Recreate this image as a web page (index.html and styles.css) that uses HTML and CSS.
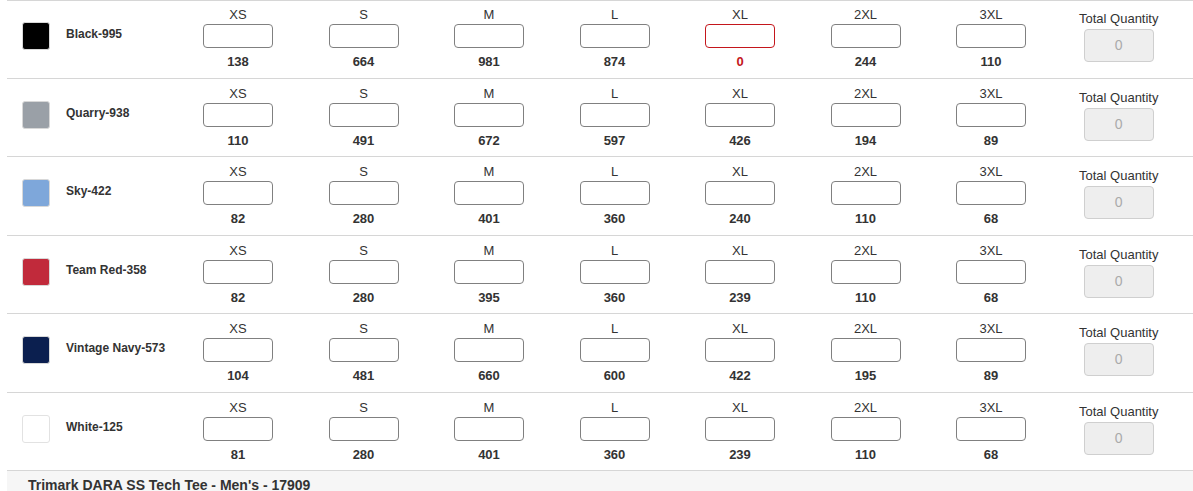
FILE: index.html
```html
<!DOCTYPE html>
<html>
<head>
<meta charset="utf-8">
<link rel="stylesheet" href="styles.css">
</head>
<body>
<div class="sheet">
  <div class="row row-first">
    <div class="color"><span class="swatch sw-black"></span><span class="name">Black-995</span></div>
    <div class="size"><span class="lbl">XS</span><input class="qty" type="text"><span class="stock">138</span></div>
    <div class="size"><span class="lbl">S</span><input class="qty" type="text"><span class="stock">664</span></div>
    <div class="size"><span class="lbl">M</span><input class="qty" type="text"><span class="stock">981</span></div>
    <div class="size"><span class="lbl">L</span><input class="qty" type="text"><span class="stock">874</span></div>
    <div class="size"><span class="lbl">XL</span><input class="qty qty-out" type="text"><span class="stock stock-out">0</span></div>
    <div class="size"><span class="lbl">2XL</span><input class="qty" type="text"><span class="stock">244</span></div>
    <div class="size"><span class="lbl">3XL</span><input class="qty" type="text"><span class="stock">110</span></div>
    <div class="total"><span class="lbl">Total Quantity</span><div class="total-box">0</div></div>
  </div>
  <div class="row">
    <div class="color"><span class="swatch sw-quarry"></span><span class="name">Quarry-938</span></div>
    <div class="size"><span class="lbl">XS</span><input class="qty" type="text"><span class="stock">110</span></div>
    <div class="size"><span class="lbl">S</span><input class="qty" type="text"><span class="stock">491</span></div>
    <div class="size"><span class="lbl">M</span><input class="qty" type="text"><span class="stock">672</span></div>
    <div class="size"><span class="lbl">L</span><input class="qty" type="text"><span class="stock">597</span></div>
    <div class="size"><span class="lbl">XL</span><input class="qty" type="text"><span class="stock">426</span></div>
    <div class="size"><span class="lbl">2XL</span><input class="qty" type="text"><span class="stock">194</span></div>
    <div class="size"><span class="lbl">3XL</span><input class="qty" type="text"><span class="stock">89</span></div>
    <div class="total"><span class="lbl">Total Quantity</span><div class="total-box">0</div></div>
  </div>
  <div class="row">
    <div class="color"><span class="swatch sw-sky"></span><span class="name">Sky-422</span></div>
    <div class="size"><span class="lbl">XS</span><input class="qty" type="text"><span class="stock">82</span></div>
    <div class="size"><span class="lbl">S</span><input class="qty" type="text"><span class="stock">280</span></div>
    <div class="size"><span class="lbl">M</span><input class="qty" type="text"><span class="stock">401</span></div>
    <div class="size"><span class="lbl">L</span><input class="qty" type="text"><span class="stock">360</span></div>
    <div class="size"><span class="lbl">XL</span><input class="qty" type="text"><span class="stock">240</span></div>
    <div class="size"><span class="lbl">2XL</span><input class="qty" type="text"><span class="stock">110</span></div>
    <div class="size"><span class="lbl">3XL</span><input class="qty" type="text"><span class="stock">68</span></div>
    <div class="total"><span class="lbl">Total Quantity</span><div class="total-box">0</div></div>
  </div>
  <div class="row">
    <div class="color"><span class="swatch sw-red"></span><span class="name">Team Red-358</span></div>
    <div class="size"><span class="lbl">XS</span><input class="qty" type="text"><span class="stock">82</span></div>
    <div class="size"><span class="lbl">S</span><input class="qty" type="text"><span class="stock">280</span></div>
    <div class="size"><span class="lbl">M</span><input class="qty" type="text"><span class="stock">395</span></div>
    <div class="size"><span class="lbl">L</span><input class="qty" type="text"><span class="stock">360</span></div>
    <div class="size"><span class="lbl">XL</span><input class="qty" type="text"><span class="stock">239</span></div>
    <div class="size"><span class="lbl">2XL</span><input class="qty" type="text"><span class="stock">110</span></div>
    <div class="size"><span class="lbl">3XL</span><input class="qty" type="text"><span class="stock">68</span></div>
    <div class="total"><span class="lbl">Total Quantity</span><div class="total-box">0</div></div>
  </div>
  <div class="row">
    <div class="color"><span class="swatch sw-navy"></span><span class="name">Vintage Navy-573</span></div>
    <div class="size"><span class="lbl">XS</span><input class="qty" type="text"><span class="stock">104</span></div>
    <div class="size"><span class="lbl">S</span><input class="qty" type="text"><span class="stock">481</span></div>
    <div class="size"><span class="lbl">M</span><input class="qty" type="text"><span class="stock">660</span></div>
    <div class="size"><span class="lbl">L</span><input class="qty" type="text"><span class="stock">600</span></div>
    <div class="size"><span class="lbl">XL</span><input class="qty" type="text"><span class="stock">422</span></div>
    <div class="size"><span class="lbl">2XL</span><input class="qty" type="text"><span class="stock">195</span></div>
    <div class="size"><span class="lbl">3XL</span><input class="qty" type="text"><span class="stock">89</span></div>
    <div class="total"><span class="lbl">Total Quantity</span><div class="total-box">0</div></div>
  </div>
  <div class="row">
    <div class="color"><span class="swatch sw-white"></span><span class="name">White-125</span></div>
    <div class="size"><span class="lbl">XS</span><input class="qty" type="text"><span class="stock">81</span></div>
    <div class="size"><span class="lbl">S</span><input class="qty" type="text"><span class="stock">280</span></div>
    <div class="size"><span class="lbl">M</span><input class="qty" type="text"><span class="stock">401</span></div>
    <div class="size"><span class="lbl">L</span><input class="qty" type="text"><span class="stock">360</span></div>
    <div class="size"><span class="lbl">XL</span><input class="qty" type="text"><span class="stock">239</span></div>
    <div class="size"><span class="lbl">2XL</span><input class="qty" type="text"><span class="stock">110</span></div>
    <div class="size"><span class="lbl">3XL</span><input class="qty" type="text"><span class="stock">68</span></div>
    <div class="total"><span class="lbl">Total Quantity</span><div class="total-box">0</div></div>
  </div>
  <div class="footer">Trimark DARA SS Tech Tee - Men's - 17909</div>
</div>
</body>
</html>
```
FILE: styles.css
```css
html, body {
  margin: 0;
  padding: 0;
  background: #fff;
  overflow: hidden;
}
body {
  font-family: "Liberation Sans", Arial, sans-serif;
  color: #333;
}
.sheet {
  margin: 0 0 0 7px;
  width: 1186px;
  border-top: 1px solid #d6d6d6;
}
.row {
  display: grid;
  grid-template-columns: 168.25px repeat(7, 125.5px) 130px;
  height: 77.5px;
  border-bottom: 1px solid #d6d6d6;
}
.row-first {
  height: 76.5px;
}
.row-first .color {
  padding-top: 21px;
}
.row-first .size {
  padding-top: 6px;
}
.row-first .total {
  padding-top: 10px;
}
.color {
  display: flex;
  align-items: flex-start;
  padding: 22px 0 0 15px;
}
.swatch {
  width: 28px;
  height: 28px;
  box-sizing: border-box;
  border: 1px solid #d8d8d8;
  border-radius: 3px;
  flex: none;
}
.sw-black { background: #000; }
.sw-quarry { background: #9aa0a7; }
.sw-sky { background: #7ea7da; }
.sw-red { background: #c12a3b; }
.sw-navy { background: #0b1f4f; }
.sw-white { background: #fff; border-color: #e2e2e2; }
.name {
  margin: 5px 0 0 16px;
  font-size: 12px;
  font-weight: bold;
  line-height: 15px;
  white-space: nowrap;
}
.size {
  display: flex;
  flex-direction: column;
  align-items: center;
  padding-top: 7px;
}
.lbl {
  font-size: 13px;
  line-height: 15px;
  white-space: nowrap;
}
.qty {
  margin: 2px 0 0;
  width: 70px;
  height: 24px;
  box-sizing: border-box;
  border: 1px solid #808080;
  border-radius: 4px;
  background: #fff;
  padding: 0;
  outline: none;
}
.qty-out {
  border-color: #c4161c;
}
.stock {
  margin-top: 6px;
  font-size: 13px;
  font-weight: bold;
  line-height: 15px;
}
.stock-out {
  color: #c4161c;
}
.total {
  display: flex;
  flex-direction: column;
  align-items: center;
  padding-top: 11px;
}
.total .lbl {
  font-size: 13px;
}
.total-box {
  margin-top: 3px;
  width: 70px;
  height: 33px;
  box-sizing: border-box;
  border: 1px solid #cfcfcf;
  border-radius: 4px;
  background: #eee;
  color: #aaa;
  font-size: 14px;
  line-height: 31px;
  text-align: center;
}
.footer {
  background: #f6f6f6;
  height: 30px;
  padding: 5px 0 0 21px;
  font-size: 14px;
  font-weight: bold;
  line-height: 18px;
  color: #333;
}
```
